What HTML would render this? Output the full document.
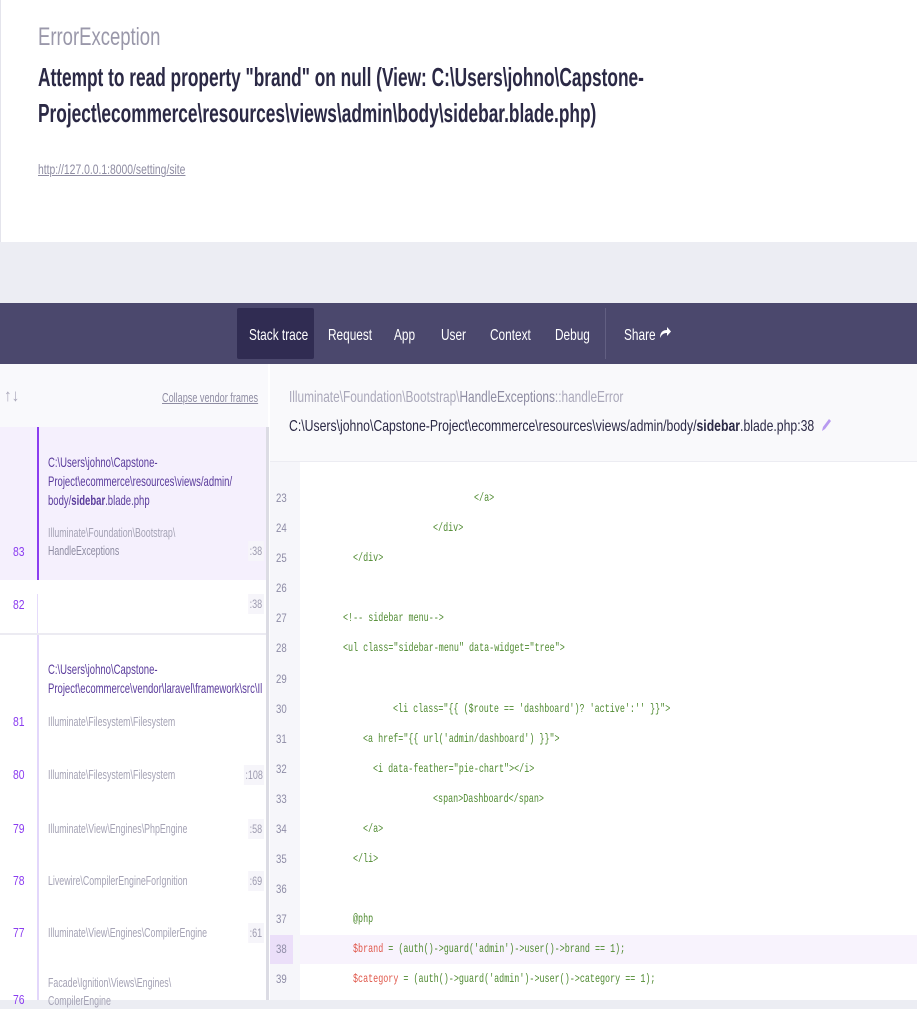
<!DOCTYPE html>
<html><head><meta charset="utf-8"><style>
*{margin:0;padding:0;box-sizing:border-box}
body{width:917px;height:1000px;overflow:hidden;background:#ecedf3;font-family:"Liberation Sans",sans-serif;position:relative}
.a{position:absolute}
.t{position:absolute;white-space:nowrap;transform:scaleX(.74);transform-origin:0 0;line-height:1.2}
.m{position:absolute;white-space:nowrap;transform:scaleX(.70);transform-origin:0 0;font-family:"Liberation Mono",monospace;font-size:12px;color:#4f8a30;line-height:1.2}
.n{position:absolute;left:276px;font-size:12px;color:#8e8ca6;transform:scaleX(.8);transform-origin:0 0;line-height:1.2}
.ln{position:absolute;left:13px;font-size:13px;color:#8b3df0;transform:scaleX(.8);transform-origin:0 0}
.cl{position:absolute;font-size:13px;color:#a5a3b5;line-height:1.2;white-space:nowrap;transform:scaleX(.68);transform-origin:0 0}
.num{position:absolute;font-size:12px;color:#9e9cb0;background:#f6f5fa;padding:3px 2px;transform:scaleX(.75);transform-origin:100% 0}
</style></head><body>
<div class="a" style="left:0;top:0;width:917px;height:242px;background:#fff;border-left:1px solid #e4e4ec"></div>
<div class="t" style="left:38px;top:22px;font-size:25px;color:#9a98aa">ErrorException</div>
<div class="t" style="left:38px;top:62px;font-size:26px;color:#2b2945;font-weight:bold;transform:scaleX(.665)">Attempt to read property "brand" on null (View: C:\Users\johno\Capstone-</div>
<div class="t" style="left:38px;top:98px;font-size:26px;color:#2b2945;font-weight:bold;transform:scaleX(.665)">Project\ecommerce\resources\views\admin\body\sidebar.blade.php)</div>
<div class="t" style="left:38px;top:161px;font-size:14px;color:#8e8ca2;text-decoration:underline">http://127.0.0.1:8000/setting/site</div>

<div class="a" style="left:0;top:303px;width:917px;height:61px;background:#4b486d"></div>
<div class="a" style="left:237px;top:308px;width:77px;height:51px;background:#302c52;border-radius:2px"></div>
<div class="a" style="left:605px;top:308px;width:1px;height:51px;background:#625f82"></div>
<div class="t" style="left:249px;top:326px;font-size:16px;color:#fff">Stack trace</div>
<div class="t" style="left:328px;top:326px;font-size:16px;color:#fff">Request</div>
<div class="t" style="left:394px;top:326px;font-size:16px;color:#fff">App</div>
<div class="t" style="left:441px;top:326px;font-size:16px;color:#fff">User</div>
<div class="t" style="left:490px;top:326px;font-size:16px;color:#fff">Context</div>
<div class="t" style="left:555px;top:326px;font-size:16px;color:#fff">Debug</div>
<div class="t" style="left:624px;top:326px;font-size:16px;color:#fff">Share</div>
<svg class="a" style="left:659px;top:325px" width="12" height="14" viewBox="0 0 12 14"><path d="M1 13 C1 7 4 5 8 5 L8 2 L12 6.5 L8 11 L8 8 C5 8 3 9 1 13Z" fill="#fff"/></svg>

<div class="a" style="left:0;top:364px;width:270px;height:636px;background:#fff"></div>
<div class="a" style="left:0;top:364px;width:268px;height:63px;background:#f9f9fc"></div>
<div class="t" style="left:4px;top:386px;font-size:17px;color:#aaa8ba;transform:scaleX(.9)">↑↓</div>
<div class="t" style="left:162px;top:390px;font-size:13px;color:#8e8ca2;text-decoration:underline;transform:scaleX(.7)">Collapse vendor frames</div>
<div class="a" style="left:0;top:427px;width:266px;height:153px;background:#f5f0fd"></div>
<div class="a" style="left:37px;top:427px;width:2px;height:153px;background:#8b3df0"></div>
<div class="t" style="left:48px;top:453px;font-size:14px;color:#5a3b9c;line-height:19px;transform:scaleX(.68)">C:\Users\johno\Capstone-<br>Project\ecommerce\resources\views/admin/<br>body/<b>sidebar</b>.blade.php</div>
<div class="cl" style="left:48px;top:525px">Illuminate\Foundation\Bootstrap\</div>
<div class="cl" style="left:48px;top:543px;color:#8e8ca2">HandleExceptions</div>
<div class="ln" style="top:544px">83</div>
<div class="num" style="right:653px;top:541px">:38</div>
<div class="ln" style="top:597px">82</div>
<div class="a" style="left:37px;top:594px;width:1px;height:40px;background:#e5dbfb"></div>
<div class="num" style="right:653px;top:594px">:38</div>
<div class="a" style="left:0;top:633px;width:266px;height:2px;background:#ecebf2"></div>
<div class="a" style="left:37px;top:635px;width:2px;height:365px;background:#e3d7fb"></div>
<div class="t" style="left:48px;top:660px;font-size:14px;color:#5a3b9c;line-height:19px;transform:scaleX(.68)">C:\Users\johno\Capstone-<br>Project\ecommerce\vendor\laravel\framework\src\Il</div>
<div class="ln" style="top:714px">81</div><div class="cl" style="left:48px;top:714px">Illuminate\Filesystem\Filesystem</div>
<div class="ln" style="top:767px">80</div><div class="cl" style="left:48px;top:767px">Illuminate\Filesystem\Filesystem</div><div class="num" style="right:653px;top:765px">:108</div>
<div class="ln" style="top:821px">79</div><div class="cl" style="left:48px;top:821px">Illuminate\View\Engines\PhpEngine</div><div class="num" style="right:653px;top:819px">:58</div>
<div class="ln" style="top:873px">78</div><div class="cl" style="left:48px;top:873px">Livewire\CompilerEngineForIgnition</div><div class="num" style="right:653px;top:871px">:69</div>
<div class="ln" style="top:925px">77</div><div class="cl" style="left:48px;top:925px">Illuminate\View\Engines\CompilerEngine</div><div class="num" style="right:653px;top:923px">:61</div>
<div class="cl" style="left:48px;top:975px">Facade\Ignition\Views\Engines\</div>
<div class="ln" style="top:992px">76</div><div class="cl" style="left:48px;top:993px">CompilerEngine</div>
<div class="a" style="left:266px;top:427px;width:3px;height:573px;background:#dcdce4"></div>

<div class="a" style="left:270px;top:364px;width:647px;height:98px;background:#f9f9fb"></div>
<div class="a" style="left:270px;top:461px;width:647px;height:1px;background:#ececf2"></div>
<div class="t" style="left:289px;top:388px;font-size:16px;color:#aaa8ba">Illuminate\Foundation\Bootstrap\<span style="color:#8e8ca2">HandleExceptions</span>::handleError</div>
<div class="t" style="left:289px;top:417px;font-size:16px;color:#2b2945;transform:scaleX(.765)">C:\Users\johno\Capstone-Project\ecommerce\resources\views/admin/body/<b>sidebar</b>.blade.php:38</div>
<svg class="a" style="left:820px;top:417px" width="12" height="16" viewBox="0 0 12 16"><path d="M2 14 L3 10 L9 2 L11 4 L5 12Z" fill="#b89af0"/></svg>
<div class="a" style="left:270px;top:462px;width:647px;height:538px;background:#fff"></div>
<div class="a" style="left:270px;top:462px;width:30px;height:538px;background:#f6f6fa"></div>
<div class="a" style="left:300px;top:935px;width:617px;height:29px;background:#f8f3fd"></div>
<div class="a" style="left:270px;top:935px;width:23px;height:29px;background:#ebdff9"></div>

<div class="n" style="top:491px">23</div><div class="m" style="left:474px;top:491px">&lt;/a&gt;</div>
<div class="n" style="top:521px">24</div><div class="m" style="left:433px;top:521px">&lt;/div&gt;</div>
<div class="n" style="top:551px">25</div><div class="m" style="left:353px;top:551px">&lt;/div&gt;</div>
<div class="n" style="top:581px">26</div>
<div class="n" style="top:611px">27</div><div class="m" style="left:343px;top:611px">&lt;!-- sidebar menu--&gt;</div>
<div class="n" style="top:641px">28</div><div class="m" style="left:343px;top:641px">&lt;ul class="sidebar-menu" data-widget="tree"&gt;</div>
<div class="n" style="top:672px">29</div>
<div class="n" style="top:702px">30</div><div class="m" style="left:393px;top:702px">&lt;li class="{{ ($route == 'dashboard')? 'active':'' }}"&gt;</div>
<div class="n" style="top:732px">31</div><div class="m" style="left:363px;top:732px">&lt;a href="{{ url('admin/dashboard') }}"&gt;</div>
<div class="n" style="top:762px">32</div><div class="m" style="left:373px;top:762px">&lt;i data-feather="pie-chart"&gt;&lt;/i&gt;</div>
<div class="n" style="top:792px">33</div><div class="m" style="left:433px;top:792px">&lt;span&gt;Dashboard&lt;/span&gt;</div>
<div class="n" style="top:822px">34</div><div class="m" style="left:363px;top:822px">&lt;/a&gt;</div>
<div class="n" style="top:852px">35</div><div class="m" style="left:353px;top:852px">&lt;/li&gt;</div>
<div class="n" style="top:882px">36</div>
<div class="n" style="top:912px">37</div><div class="m" style="left:353px;top:912px">@php</div>
<div class="n" style="top:942px">38</div><div class="m" style="left:353px;top:942px"><span style="color:#e0574a">$brand</span> = (auth()-&gt;guard('admin')-&gt;user()-&gt;brand == 1);</div>
<div class="n" style="top:972px">39</div><div class="m" style="left:353px;top:972px"><span style="color:#e0574a">$category</span> = (auth()-&gt;guard('admin')-&gt;user()-&gt;category == 1);</div>
</body></html>
